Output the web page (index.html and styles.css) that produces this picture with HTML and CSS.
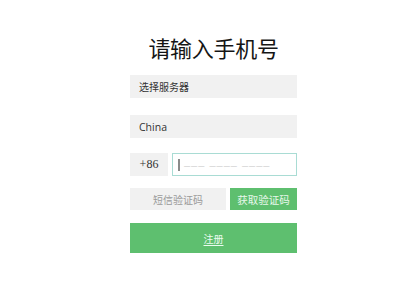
FILE: index.html
```html
<!DOCTYPE html>
<html lang="zh-CN">
<head>
<meta charset="utf-8">
<title>请输入手机号</title>
<link rel="stylesheet" href="styles.css">
</head>
<body>
<main class="form">
  <h1 class="title">请输入手机号</h1>
  <div class="field field-server">选择服务器</div>
  <div class="field field-country">China</div>
  <div class="phone-row">
    <div class="prefix">+86</div>
    <div class="phone-input"><span class="caret"></span><span class="ph">––– –––– ––––</span></div>
  </div>
  <div class="sms-row">
    <div class="sms-code">短信验证码</div>
    <div class="sms-btn">获取验证码</div>
  </div>
  <div class="register"><span class="register-text">注册</span></div>
</main>
</body>
</html>
```

FILE: styles.css
```css
html, body {
  margin: 0;
  padding: 0;
  background: #ffffff;
}
body {
  width: 400px;
  height: 300px;
  overflow: hidden;
  font-family: "Noto Sans CJK SC", "Liberation Sans", sans-serif;
}
.form {
  width: 167px;
  margin-left: 130px;
  padding-top: 33px;
  display: flex;
  flex-direction: column;
}
.title {
  margin: 0 0 14px 0;
  font-size: 22px;
  line-height: 28px;
  font-weight: 400;
  color: #151515;
  text-align: center;
  letter-spacing: -0.3px;
}
.field {
  height: 23px;
  background: #f1f1f1;
  display: flex;
  align-items: center;
  padding-left: 9px;
  color: #333;
}
.field-server {
  font-size: 10px;
  margin-bottom: 17px;
}
.field-country {
  font-family: "Open Sans", "Noto Sans", sans-serif;
  font-size: 10.5px;
  margin-bottom: 15px;
}
.phone-row {
  display: flex;
  height: 23px;
  gap: 4px;
  margin-bottom: 12px;
}
.prefix {
  width: 38px;
  background: #f1f1f1;
  display: flex;
  align-items: center;
  justify-content: center;
  font-family: "Liberation Serif", serif;
  font-size: 12px;
  color: #333;
}
.phone-input {
  flex: 1;
  box-sizing: border-box;
  border: 1px solid #a9dcd4;
  background: #fff;
  display: flex;
  align-items: center;
  padding-left: 5px;
}
.caret {
  width: 2px;
  height: 12px;
  background: #8a8a8a;
  margin-right: 4px;
}
.ph {
  font-family: "Liberation Sans", sans-serif;
  font-size: 11px;
  color: #d6d6d6;
  letter-spacing: 1px;
}
.sms-row {
  display: flex;
  height: 22px;
  gap: 4px;
  margin-bottom: 13px;
}
.sms-code {
  width: 96px;
  background: #f1f1f1;
  display: flex;
  align-items: center;
  justify-content: center;
  font-size: 10px;
  color: #9a9a9a;
}
.sms-btn {
  flex: 1;
  background: #5ebf6f;
  display: flex;
  align-items: center;
  justify-content: center;
  font-size: 10.5px;
  color: #e8f8eb;
}
.register {
  height: 30px;
  background: #5ebf6f;
  display: flex;
  align-items: center;
  justify-content: center;
}
.register-text {
  font-size: 10px;
  color: #eafbee;
  text-decoration: underline;
  text-underline-offset: 2px;
}
```
